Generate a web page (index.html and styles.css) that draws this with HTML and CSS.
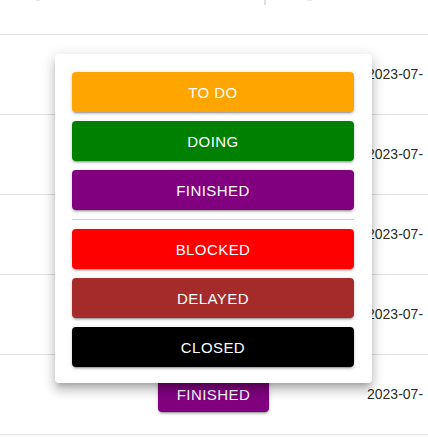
FILE: index.html
```html
<!DOCTYPE html>
<html lang="en">
<head>
<meta charset="utf-8">
<title>Status menu</title>
<link rel="stylesheet" href="styles.css">
</head>
<body>
<div class="page">
  <div class="table">
    <div class="head">
      <span class="head-mark head-mark-a"></span>
      <span class="head-sep"></span>
      <span class="head-mark head-mark-b"></span>
    </div>
    <div class="row"><div class="cell-status"></div><div class="cell-date">2023-07-</div></div>
    <div class="row"><div class="cell-status"></div><div class="cell-date">2023-07-</div></div>
    <div class="row"><div class="cell-status"></div><div class="cell-date">2023-07-</div></div>
    <div class="row"><div class="cell-status"></div><div class="cell-date">2023-07-</div></div>
    <div class="row">
      <div class="cell-status"><span class="chip chip-finished">FINISHED</span></div>
      <div class="cell-date">2023-07-</div>
    </div>
  </div>

  <div class="menu">
    <button class="status-btn s-todo">TO DO</button>
    <button class="status-btn s-doing">DOING</button>
    <button class="status-btn s-finished">FINISHED</button>
    <hr class="divider">
    <button class="status-btn s-blocked">BLOCKED</button>
    <button class="status-btn s-delayed">DELAYED</button>
    <button class="status-btn s-closed">CLOSED</button>
  </div>
</div>
</body>
</html>
```

FILE: styles.css
```css
html, body {
  margin: 0;
  padding: 0;
  background: #fff;
  overflow: hidden;
}

body {
  font-family: "Liberation Sans", Arial, sans-serif;
  color: rgba(0, 0, 0, 0.87);
}

.page {
  position: relative;
  width: 428px;
  height: 438px;
  overflow: hidden;
}

.table {
  display: flex;
  flex-direction: column;
}

.head {
  position: relative;
  height: 34px;
  border-bottom: 1px solid #e0e0e0;
}

.head-sep {
  position: absolute;
  left: 264px;
  top: 0;
  width: 2px;
  height: 5px;
  background: #e0e0e0;
}

.head-mark {
  position: absolute;
  top: 0;
  height: 1px;
  background: #e8e8e8;
}
.head-mark-a { left: 36px; width: 4px; }
.head-mark-b { left: 307px; width: 5px; }

.row {
  height: 79px;
  border-bottom: 1px solid #e0e0e0;
  display: grid;
  grid-template-columns: 367px 1fr;
  align-items: center;
}

.cell-status {
  display: flex;
  padding-left: 158px;
}

.cell-date {
  font-size: 14px;
  white-space: nowrap;
  overflow: hidden;
  padding-bottom: 1px;
}

.chip {
  display: flex;
  align-items: center;
  justify-content: center;
  width: 111px;
  height: 36px;
  margin-bottom: 1px;
  border-radius: 4px;
  color: #fff;
  font-size: 15px;
  letter-spacing: 0.43px;
  box-shadow: 0 3px 1px -2px rgba(0,0,0,0.2), 0 2px 2px 0 rgba(0,0,0,0.14), 0 1px 5px 0 rgba(0,0,0,0.12);
}

.chip-finished { background: #800080; }

.menu {
  position: absolute;
  left: 55px;
  top: 54px;
  width: 317px;
  box-sizing: border-box;
  padding: 18px 18px 16px 17px;
  background: #fff;
  border-radius: 4px;
  box-shadow: 0 5px 5px -3px rgba(0,0,0,0.2), 0 8px 10px 1px rgba(0,0,0,0.14), 0 3px 14px 2px rgba(0,0,0,0.12);
  display: flex;
  flex-direction: column;
  gap: 9px;
}

.status-btn {
  display: flex;
  align-items: center;
  justify-content: center;
  height: 40px;
  border: 0;
  margin: 0;
  padding: 0;
  border-radius: 4px;
  color: #fff;
  font-family: "Liberation Sans", Arial, sans-serif;
  font-size: 15px;
  letter-spacing: 0.43px;
  box-shadow: 0 3px 1px -2px rgba(0,0,0,0.2), 0 2px 2px 0 rgba(0,0,0,0.14), 0 1px 5px 0 rgba(0,0,0,0.12);
}

.s-todo { background: #ffa500; }
.s-doing { background: #008000; }
.s-finished { background: #800080; }
.s-blocked { background: #ff0000; }
.s-delayed { background: #a52a2a; }
.s-closed { background: #000000; }

.divider {
  margin: 0;
  border: 0;
  height: 1px;
  background: #d0d0d0;
}
```
